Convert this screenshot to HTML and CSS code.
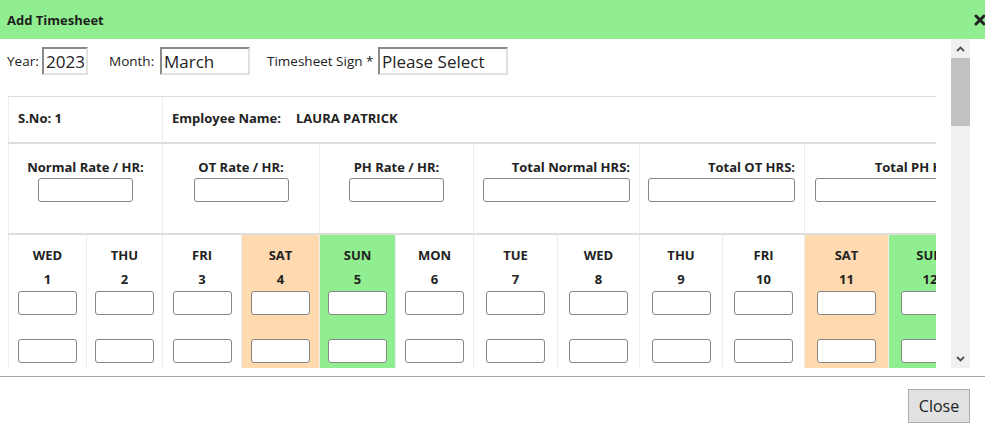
FILE: index.html
```html
<!DOCTYPE html>
<html>
<head>
<meta charset="utf-8">
<link rel="stylesheet" href="styles.css">
</head>
<body>
<div class="modal">
  <div class="modal-header">
    <span class="title">Add Timesheet</span>
    <svg class="close-x" viewBox="0 0 12 12"><path d="M2 2 L10 10 M10 2 L2 10" stroke="#222" stroke-width="3" stroke-linecap="round"/></svg>
  </div>
  <div class="modal-body">
    <div class="scroll-area">
      <div class="content">
        <div class="form-row">
          <div class="grp g1"><span class="flbl l-year">Year:</span><input class="top-in w-year" value="2023"></div>
          <div class="grp g2"><span class="flbl l-month">Month:</span><input class="top-in w-month" value="March"></div>
          <div class="grp g3"><span class="flbl l-sign">Timesheet Sign *</span><input class="top-in w-sign" value="Please Select"></div>
        </div>
        <div class="table-wrap">
          <table class="ts">
            <colgroup>
              <col class="c78"><col class="c76"><col class="c79"><col class="c78"><col class="c76"><col class="c78"><col class="c84"><col class="c82"><col class="c83"><col class="c82"><col class="c84"><col class="c83"><col class="c82"><col class="c82">
            </colgroup>
            <tbody class="first">
              <tr class="r1">
                <td colspan="2" class="info">S.No: 1</td>
                <td colspan="12" class="info"><span class="emp-label">Employee Name:</span>LAURA PATRICK</td>
              </tr>
            </tbody>
            <tbody>
              <tr class="r2">
                <td colspan="2" class="rate"><span class="lbl">Normal Rate / HR:</span><input class="in rate-in"></td>
                <td colspan="2" class="rate"><span class="lbl">OT Rate / HR:</span><input class="in rate-in"></td>
                <td colspan="2" class="rate"><span class="lbl">PH Rate / HR:</span><input class="in rate-in"></td>
                <td colspan="2" class="total"><span class="lbl">Total Normal HRS:</span><input class="in total-in"></td>
                <td colspan="2" class="total"><span class="lbl">Total OT HRS:</span><input class="in total-in"></td>
                <td colspan="2" class="total"><span class="lbl">Total PH HRS:</span><input class="in total-in"></td>
                <td colspan="2" class="total"></td>
              </tr>
            </tbody>
            <tbody>
              <tr class="r3">
                <td class="day"><span class="dname">WED</span><span class="dnum">1</span><input class="in day-in"><input class="in day-in second"></td>
                <td class="day"><span class="dname">THU</span><span class="dnum">2</span><input class="in day-in"><input class="in day-in second"></td>
                <td class="day"><span class="dname">FRI</span><span class="dnum">3</span><input class="in day-in"><input class="in day-in second"></td>
                <td class="day sat"><span class="dname">SAT</span><span class="dnum">4</span><input class="in day-in"><input class="in day-in second"></td>
                <td class="day sun"><span class="dname">SUN</span><span class="dnum">5</span><input class="in day-in"><input class="in day-in second"></td>
                <td class="day"><span class="dname">MON</span><span class="dnum">6</span><input class="in day-in"><input class="in day-in second"></td>
                <td class="day"><span class="dname">TUE</span><span class="dnum">7</span><input class="in day-in"><input class="in day-in second"></td>
                <td class="day"><span class="dname">WED</span><span class="dnum">8</span><input class="in day-in"><input class="in day-in second"></td>
                <td class="day"><span class="dname">THU</span><span class="dnum">9</span><input class="in day-in"><input class="in day-in second"></td>
                <td class="day"><span class="dname">FRI</span><span class="dnum">10</span><input class="in day-in"><input class="in day-in second"></td>
                <td class="day sat"><span class="dname">SAT</span><span class="dnum">11</span><input class="in day-in"><input class="in day-in second"></td>
                <td class="day sun"><span class="dname">SUN</span><span class="dnum">12</span><input class="in day-in"><input class="in day-in second"></td>
                <td class="day"><span class="dname">MON</span><span class="dnum">13</span><input class="in day-in"><input class="in day-in second"></td>
                <td class="day"><span class="dname">TUE</span><span class="dnum">14</span><input class="in day-in"><input class="in day-in second"></td>
              </tr>
            </tbody>
          </table>
        </div>
      </div>
      <div class="scrollbar">
        <div class="sb-arrow"><svg viewBox="0 0 9 6" class="chev"><polyline points="1,5 4.5,1.5 8,5" fill="none" stroke="#505050" stroke-width="1.8"/></svg></div>
        <div class="sb-thumb"></div>
        <div class="sb-track"></div>
        <div class="sb-arrow"><svg viewBox="0 0 9 6" class="chev"><polyline points="1,1 4.5,4.5 8,1" fill="none" stroke="#505050" stroke-width="1.8"/></svg></div>
      </div>
    </div>
  </div>
  <div class="modal-footer">
    <button class="btn-close">Close</button>
  </div>
</div>
</body>
</html>
```

FILE: styles.css
```css
* { box-sizing: border-box; }
html, body { margin: 0; padding: 0; }
body {
  width: 985px;
  height: 428px;
  overflow: hidden;
  font-family: "Open Sans", "Noto Sans", sans-serif;
  font-size: 13px;
  color: #222;
  background: #fff;
}
.modal {
  width: 985px;
  height: 428px;
  display: flex;
  flex-direction: column;
}
.modal-header {
  flex: 0 0 39px;
  background: #90ee90;
  display: flex;
  align-items: center;
  justify-content: space-between;
  padding-left: 7px;
  margin-right: -1px;
}
.title { font-weight: bold; font-size: 13px; color: #1e1e1e; }
.close-x { width: 12px; height: 12px; display: block; }
.modal-body {
  flex: 0 0 337px;
  padding: 0 15px 8px 0;
  display: flex;
}
.scroll-area {
  flex: 1;
  display: flex;
  height: 329px;
}
.content {
  flex: 1;
  min-width: 0;
  overflow: hidden;
}
.scrollbar {
  flex: 0 0 19px;
  background: #f1f1f1;
  display: flex;
  flex-direction: column;
}
.sb-arrow {
  flex: 0 0 19px;
  display: flex;
  align-items: center;
  justify-content: center;
}
.chev { width: 9px; height: 6px; display: block; }
.sb-thumb { flex: 0 0 68px; background: #c1c1c1; }
.sb-track { flex: 1; }

.form-row {
  display: flex;
  align-items: center;
  padding: 8px 0 0 7px;
  height: 36px;
  margin-bottom: 21px;
  font-size: 13.5px;
}
.grp { display: flex; align-items: center; }
.g1 { width: 102px; }
.g2 { width: 158px; }
.flbl { white-space: nowrap; }
.l-year { width: 35px; }
.l-month { width: 51px; }
.l-sign { width: 111px; }
.top-in {
  height: 28px;
  font-family: "Open Sans", "Noto Sans", sans-serif;
  font-size: 17px;
  color: #222;
  padding: 0 2px;
  border-top: 2px solid #8a8a8a;
  border-left: 2px solid #8a8a8a;
  border-right: 2px solid #e0e0e0;
  border-bottom: 2px solid #e0e0e0;
  background: #fff;
  outline: none;
}
.w-year { width: 46px; }
.w-month { width: 90px; }
.w-sign { width: 130px; }

.table-wrap {
  margin-left: 8px;
  width: 928px;
  overflow: hidden;
}
.ts {
  table-layout: fixed;
  width: 1127px;
  border-collapse: separate;
  border-spacing: 0;
}
.c76 { width: 76px; }
.c78 { width: 78px; }
.c79 { width: 79px; }
.c82 { width: 82px; }
.c83 { width: 83px; }
.c84 { width: 84px; }
.ts td {
  border-left: 1px solid #ececec;
  border-top: 2px solid #dddddd;
  padding: 0;
  font-weight: bold;
  font-size: 13px;
}
.ts .first td { border-top: 1px solid #dddddd; }
.r1 td { height: 46px; vertical-align: middle; padding-bottom: 3px; }
.info { padding-left: 9px !important; }
.emp-label { margin-right: 15px; }
.r2 td { height: 91px; vertical-align: top; }
.lbl { display: block; line-height: 18px; padding-top: 14px; margin-bottom: 2px; }
.rate { text-align: center; }
.total { text-align: right; padding-right: 9px !important; }
.in {
  display: block;
  height: 24px;
  border: 1px solid #858585;
  border-radius: 3px;
  background: #fff;
  outline: none;
}
.rate-in { width: 95px; margin: 0 auto; }
.total-in { width: 147px; margin-left: auto; }
.r3 td { height: 140px; vertical-align: top; text-align: center; padding-top: 8px; }
.dname, .dnum { display: block; line-height: 24px; font-size: 13px; }
.day-in { width: 59px; margin: 0 auto; }
.day-in.second { margin-top: 24px; }
.sat { background: #ffd9b0; }
.sun { background: #90ee90; }

.modal-footer {
  flex: 1;
  border-top: 1px solid #a8a8a8;
  padding: 12px 15px 0 0;
  display: flex;
  justify-content: flex-end;
  align-items: flex-start;
}
.btn-close {
  width: 62px;
  height: 34px;
  background: #e1e1e1;
  border: 1px solid #adadad;
  font-family: "Open Sans", "Noto Sans", sans-serif;
  font-size: 16px;
  color: #222;
  padding: 0;
}
```
